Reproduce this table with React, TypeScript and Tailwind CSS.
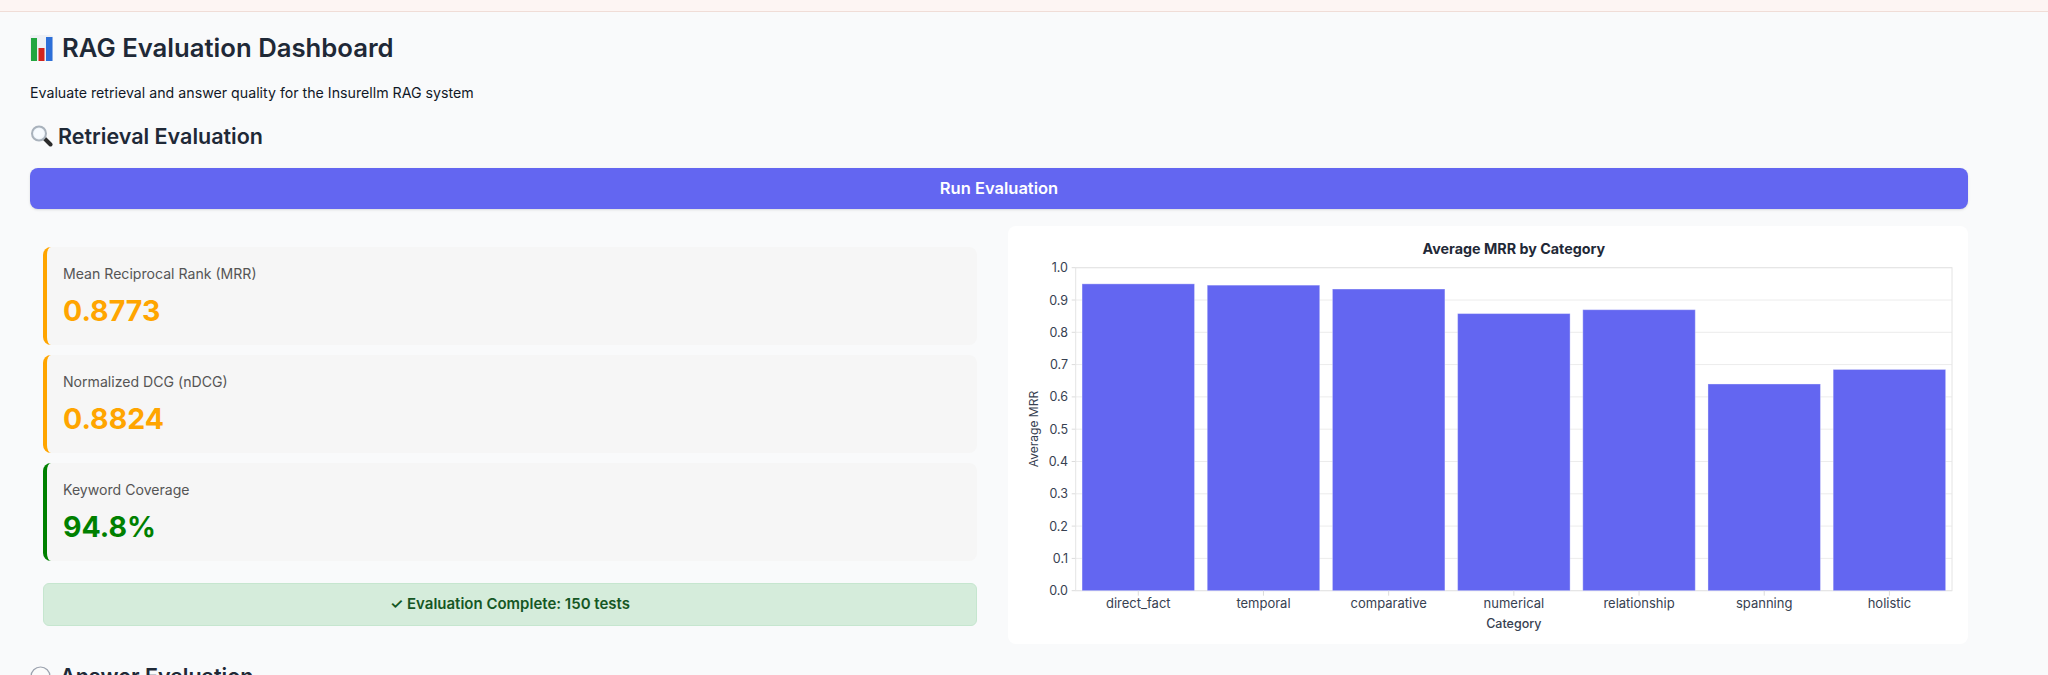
import React from "react";

const categories = [
  { name: "direct_fact", value: 0.95 },
  { name: "temporal", value: 0.946 },
  { name: "comparative", value: 0.934 },
  { name: "numerical", value: 0.858 },
  { name: "relationship", value: 0.87 },
  { name: "spanning", value: 0.64 },
  { name: "holistic", value: 0.685 },
];

const metrics = [
  { label: "Mean Reciprocal Rank (MRR)", value: "0.8773", color: "orange" },
  { label: "Normalized DCG (nDCG)", value: "0.8824", color: "orange" },
  { label: "Keyword Coverage", value: "94.8%", color: "green" },
];

function ChartEmoji() {
  return (
    <svg width="23" height="26" viewBox="0 0 23 26">
      <rect x="0" y="0" width="23" height="26" rx="2" fill="#eef0f4" />
      <rect x="1" y="3" width="6" height="23" fill="#22a640" />
      <rect x="8.5" y="13" width="6" height="13" fill="#d3241c" />
      <rect x="16" y="2" width="6.5" height="24" fill="#2d6fd8" />
    </svg>
  );
}

function SearchEmoji() {
  return (
    <svg width="23" height="22" viewBox="0 0 23 22">
      <line x1="13" y1="12" x2="20.5" y2="19.5" stroke="#2b2b2b" strokeWidth="4" strokeLinecap="round" />
      <circle cx="9" cy="8.5" r="7" fill="#eef4fa" stroke="#a9b2bc" strokeWidth="2" />
      <circle cx="9" cy="8.5" r="5" fill="#f7fbff" />
    </svg>
  );
}

function BubbleEmoji() {
  return (
    <svg width="21" height="21" viewBox="0 0 21 21">
      <circle cx="10.5" cy="10.5" r="9.5" fill="#fbfbfb" stroke="#9ca3af" strokeWidth="1.2" />
      <circle cx="6.5" cy="11" r="1" fill="#6b7280" />
      <circle cx="10.5" cy="11" r="1" fill="#6b7280" />
      <circle cx="14.5" cy="11" r="1" fill="#6b7280" />
    </svg>
  );
}

function MrrChart() {
  const left = 67.7;
  const right = 944;
  const top = 41.7;
  const bottom = 364.7;
  const h = bottom - top;
  const step = (right - left) / 7;
  const barW = 112.5;
  const outer = (step - barW) / 2;
  const ticks = [0, 0.1, 0.2, 0.3, 0.4, 0.5, 0.6, 0.7, 0.8, 0.9, 1.0];

  return (
    <svg width="960" height="418" viewBox="0 0 960 418" className="block">
      <text x={(left + right) / 2} y="28" textAnchor="middle" fontSize="14.3" fontWeight="700" fill="#1f2937">
        Average MRR by Category
      </text>
      {ticks.map((t) => {
        const y = bottom - t * h;
        return (
          <g key={t}>
            <line x1={left} x2={right} y1={y} y2={y} stroke="#ececec" strokeWidth="1" />
            <line x1={left - 4} x2={left} y1={y} y2={y} stroke="#dcdcdc" strokeWidth="1" />
            <text x="60" y={y + 4.5} textAnchor="end" fontSize="12.5" fill="#374151">
              {t.toFixed(1)}
            </text>
          </g>
        );
      })}
      <rect x={left} y={top} width={right - left} height={h} fill="none" stroke="#e4e4e4" strokeWidth="1" />
      {categories.map((c, i) => {
        const x = left + outer + i * step;
        const bh = c.value * h;
        const cx = left + step / 2 + i * step;
        return (
          <g key={c.name}>
            <rect x={x} y={bottom - bh} width={barW} height={bh} fill="#6366f1" stroke="#ffffff" strokeOpacity="0.35" strokeWidth="1" />
            <line x1={cx} x2={cx} y1={bottom} y2={bottom + 5} stroke="#dcdcdc" strokeWidth="1" />
            <text x={cx} y="382" textAnchor="middle" fontSize="13" fill="#374151">
              {c.name}
            </text>
          </g>
        );
      })}
      <text x={(left + right) / 2} y="401.5" textAnchor="middle" fontSize="12.5" fontWeight="500" fill="#374151">
        Category
      </text>
      <text
        x="25"
        y="203"
        textAnchor="middle"
        dominantBaseline="central"
        fontSize="12"
        fill="#374151"
        transform="rotate(-90 25 203)"
      >
        Average MRR
      </text>
    </svg>
  );
}

export default function App() {
  return (
    <div className="min-h-screen bg-[#f9fafb] font-['Inter','Liberation_Sans',sans-serif] text-[#1f2937]">
      <div className="h-[12px] bg-[#fdf5f3] border-b border-[#f0ddd7]" />
      <div className="pl-[30px] pr-[80px] pt-[19px] flex flex-col gap-[17px]">
        <h1 className="flex items-center gap-[9px] text-[25.7px] leading-[34px] font-semibold">
          <ChartEmoji />
          <span>RAG Evaluation Dashboard</span>
        </h1>
        <p className="text-[14.2px] leading-[22px] text-[#111827]">
          Evaluate retrieval and answer quality for the Insurellm RAG system
        </p>
        <h2 className="flex items-center gap-[5px] text-[21.5px] leading-[30px] font-semibold">
          <SearchEmoji />
          <span>Retrieval Evaluation</span>
        </h2>
        <button className="h-[41px] w-full rounded-lg bg-[#6366f1] text-white text-[16.5px] font-semibold shadow-sm">
          Run Evaluation
        </button>
        <div className="flex gap-[18px]">
          <div className="w-[960px] px-[13px] pt-[21px] flex flex-col gap-[10px]">
            {metrics.map((m) => (
              <div
                key={m.label}
                className={
                  m.color === "green"
                    ? "rounded-lg bg-[#f6f6f6] border-l-4 border-[#008000] p-4"
                    : "rounded-lg bg-[#f6f6f6] border-l-4 border-[#ffa500] p-4"
                }
              >
                <div className="text-[14.1px] leading-[22px] text-[#555555] mb-2">{m.label}</div>
                <div
                  className={
                    m.color === "green"
                      ? "text-[28.5px] leading-[36px] font-bold text-[#008000]"
                      : "text-[28.5px] leading-[36px] font-bold text-[#ffa500]"
                  }
                >
                  {m.value}
                </div>
              </div>
            ))}
            <div className="mt-[12px] h-[43px] rounded-md bg-[#d5ecdb] border border-[#c6e6cf] flex items-center justify-center text-[15px] font-semibold text-[#155724]">
              ✓ Evaluation Complete: 150 tests
            </div>
          </div>
          <div className="w-[960px] h-[418px] rounded-lg bg-white">
            <MrrChart />
          </div>
        </div>
        <h2 className="flex items-center gap-[9px] text-[21.5px] leading-[30px] font-semibold">
          <BubbleEmoji />
          <span>Answer Evaluation</span>
        </h2>
      </div>
    </div>
  );
}
